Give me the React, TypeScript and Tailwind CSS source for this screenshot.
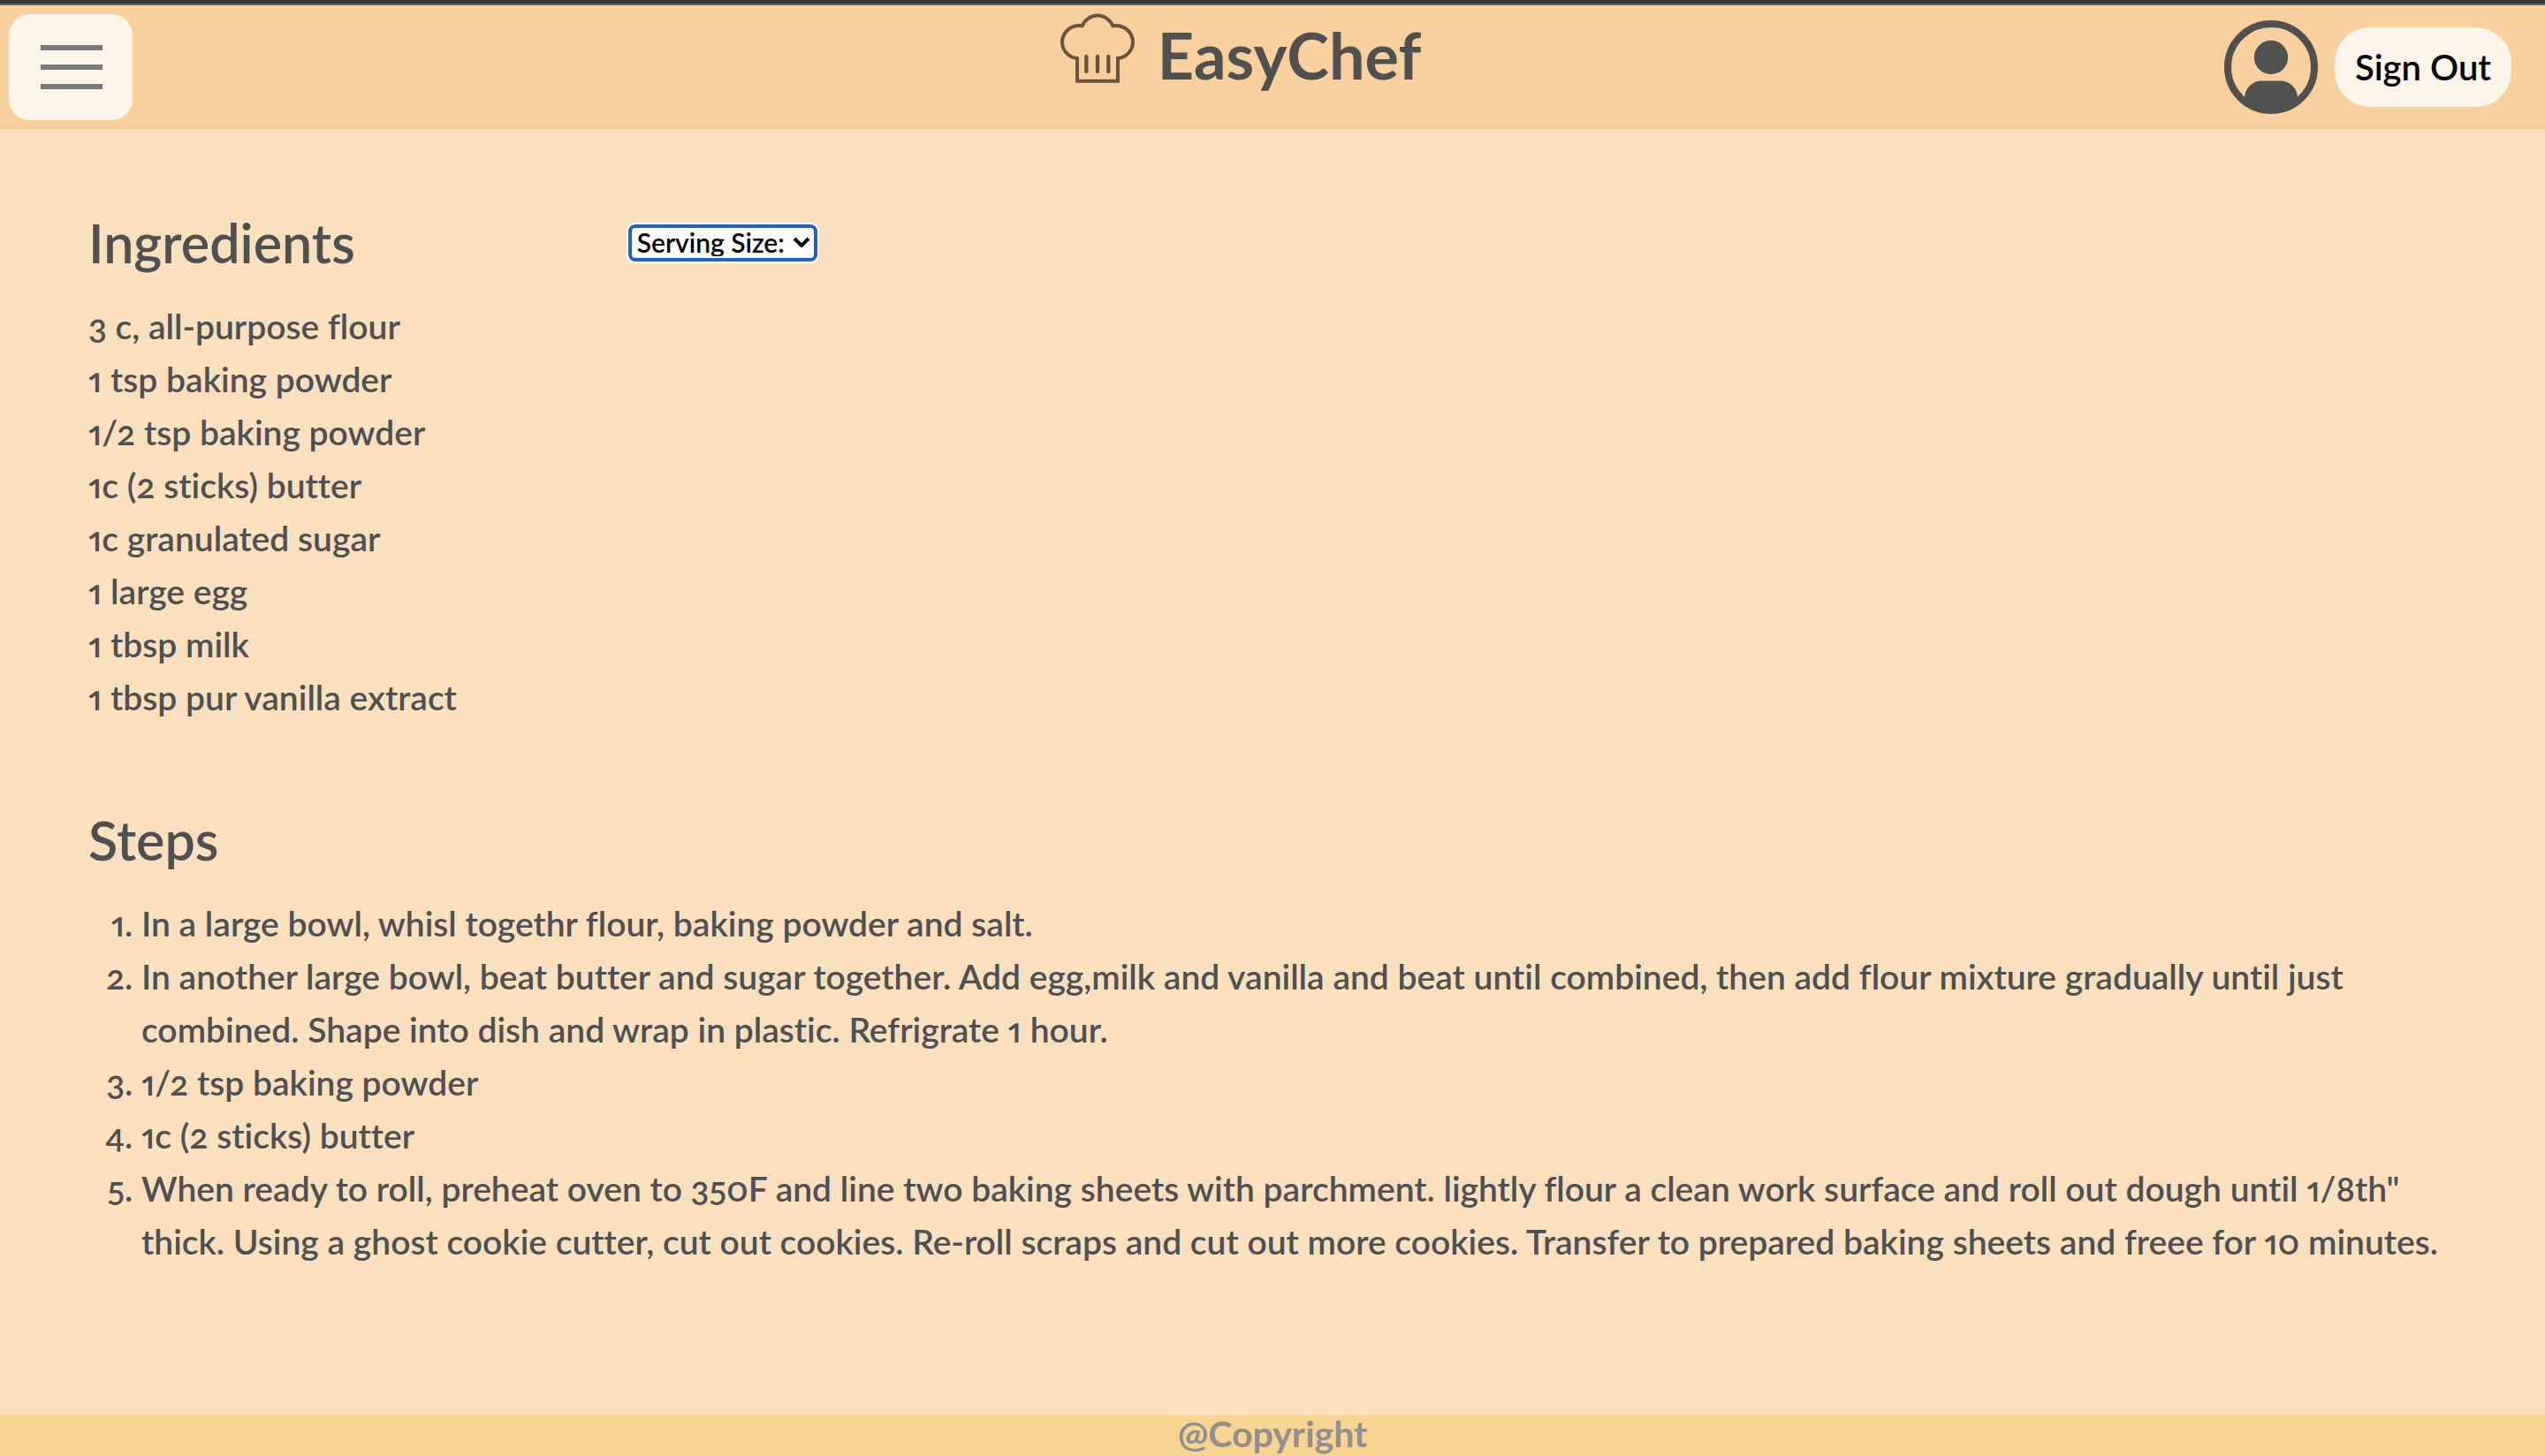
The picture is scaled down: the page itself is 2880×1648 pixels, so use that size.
import React from "react";

const ingredients = [
  "3 c, all-purpose flour",
  "1 tsp baking powder",
  "1/2 tsp baking powder",
  "1c (2 sticks) butter",
  "1c granulated sugar",
  "1 large egg",
  "1 tbsp milk",
  "1 tbsp pur vanilla extract",
];

const steps = [
  "In a large bowl, whisl togethr flour, baking powder and salt.",
  "In another large bowl, beat butter and sugar together. Add egg,milk and vanilla and beat until combined, then add flour mixture gradually until just combined. Shape into dish and wrap in plastic. Refrigrate 1 hour.",
  "1/2 tsp baking powder",
  "1c (2 sticks) butter",
  'When ready to roll, preheat oven to 350F and line two baking sheets with parchment. lightly flour a clean work surface and roll out dough until 1/8th" thick. Using a ghost cookie cutter, cut out cookies. Re-roll scraps and cut out more cookies. Transfer to prepared baking sheets and freee for 10 minutes.',
];

function ChefHat() {
  return (
    <svg
      className="h-20 w-[84px]"
      viewBox="54 42 252 240"
      fill="none"
      stroke="#695440"
      strokeWidth="12"
      aria-hidden="true"
    >
      <path d="M111 275V198A56 56 0 0 1 60 142A57 57 0 0 1 128 88A56 56 0 0 1 232 88A57 57 0 0 1 300 142A56 56 0 0 1 249 198V275Z" />
      <path d="M142 192V243M180 192V243M217 192V243" strokeWidth="13" strokeLinecap="round" />
    </svg>
  );
}

function Avatar() {
  return (
    <svg className="size-[106px]" viewBox="112 69 316 316" aria-hidden="true">
      <circle cx="270" cy="227" r="146" fill="none" stroke="#505050" strokeWidth="24" />
      <circle cx="270" cy="194" r="57" fill="#505050" />
      <path
        d="M181 330A57 57 0 0 1 238 273H302A57 57 0 0 1 359 330L352 345A146 146 0 0 1 188 345Z"
        fill="#505050"
      />
    </svg>
  );
}

function Header() {
  return (
    <header className="grid grid-cols-[1fr_auto_1fr] items-center bg-[#f7d09e] p-[10px]">
      <button
        type="button"
        aria-label="Open menu"
        className="flex h-[120px] w-[140px] flex-col justify-center gap-4 rounded-3xl bg-[#fdf4ea] px-9"
      >
        <span className="h-[6px] w-[70px] bg-[#7a7a78]" />
        <span className="h-[6px] w-[70px] bg-[#7a7a78]" />
        <span className="h-[6px] w-[70px] bg-[#7a7a78]" />
      </button>
      <a href="#" className="-mt-[2px] mr-[72px] flex items-start gap-[26px] self-start">
        <ChefHat />
        <span className="text-[72px] leading-[96px] font-bold">EasyChef</span>
      </a>
      <div className="flex items-center justify-end gap-[19px] pr-7">
        <button type="button" aria-label="Profile">
          <Avatar />
        </button>
        <button
          type="button"
          className="h-[90px] w-[200px] rounded-[40px] bg-[#fdf4ea] text-[40px] font-semibold text-black"
        >
          Sign Out
        </button>
      </div>
    </header>
  );
}

function ServingSize() {
  return (
    <div className="relative rounded-lg ring-2 ring-white">
      <select
        aria-label="Serving size"
        className="block h-[42px] appearance-none rounded-lg border-4 border-[#2160c6] bg-white pr-8 pb-[2px] pl-[6px] text-[30px] leading-8 font-semibold text-black outline-none"
      >
        <option>Serving Size:</option>
      </select>
      <svg
        className="pointer-events-none absolute top-[14px] right-2 h-3 w-5"
        viewBox="0 0 20 12"
        fill="none"
        stroke="#000"
        strokeWidth="4"
        aria-hidden="true"
      >
        <path d="M2 2L10 10L18 2" />
      </svg>
    </div>
  );
}

export default function App() {
  return (
    <div className="flex min-h-screen flex-col bg-[#fae0bf] font-[Lato,sans-serif] text-[#505050] oldstyle-nums proportional-nums [font-variant-ligatures:none]">
      <div className="h-[6px] border-b-2 border-[#5f6065] bg-[#35363a]" />
      <Header />
      <main className="flex flex-1 flex-col gap-24 px-[100px] pt-[93px] text-[39px] leading-[60px] font-semibold">
        <section className="flex flex-col gap-7">
          <div className="flex items-start gap-[309px]">
            <h2 className="text-[61px] leading-[72px]">Ingredients</h2>
            <div className="pt-[15px]">
              <ServingSize />
            </div>
          </div>
          <ul>
            {ingredients.map((item) => (
              <li key={item}>{item}</li>
            ))}
          </ul>
        </section>
        <section className="flex flex-col gap-7">
          <h2 className="text-[61px] leading-[72px]">Steps</h2>
          <ol className="list-decimal pl-[60px] marker:[font-variant-numeric:oldstyle-nums_proportional-nums]">
            {steps.map((step) => (
              <li key={step}>{step}</li>
            ))}
          </ol>
        </section>
      </main>
      <footer className="h-[46px] bg-[#f7d48f] text-center text-[41px] leading-[42px] font-bold text-[#909090]">
        @Copyright
      </footer>
    </div>
  );
}
